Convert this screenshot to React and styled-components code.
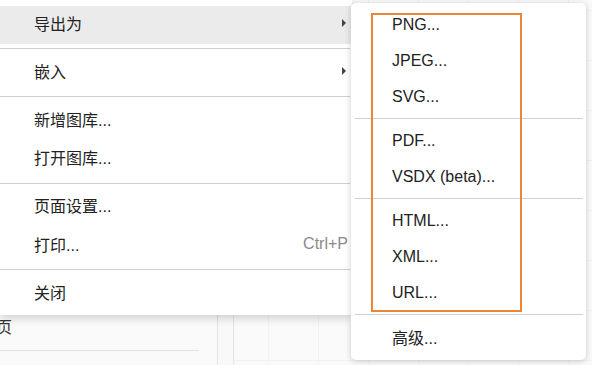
import React from "react";
import styled, { createGlobalStyle } from "styled-components";

const Global = createGlobalStyle`
  html, body { margin: 0; padding: 0; }
  body {
    width: 592px; height: 365px; overflow: hidden;
    background: #f9f9f9;
    font-family: "Liberation Sans", "Noto Sans CJK SC", sans-serif;
  }
`;

const Page = styled.div`
  position: relative;
  width: 592px;
  height: 365px;
  display: grid;
  grid-template-columns: 218px 16px 1fr;
  overflow: hidden;
`;

const Sidebar = styled.div`
  background: #fafafa;
  border-right: 1px solid #e2e2e2;
  display: flex;
  flex-direction: column;
  padding-top: 318px;
`;

const SideItem = styled.div`
  font-size: 16px;
  color: #333;
  line-height: 20px;
  margin-left: -4px;
  height: 32px;
  border-bottom: 1px solid #e2e2e2;
  margin-right: 18px;
`;

const Gutter = styled.div`
  background: #f9f9f9;
  border-right: 1px solid #e4e4e4;
`;

const Canvas = styled.div`
  background-color: #fafafa;
  background-image:
    linear-gradient(to right, #f2f2f2 1px, transparent 1px),
    linear-gradient(to bottom, #f2f2f2 1px, transparent 1px);
  background-size: 50px 50px;
  background-position: 34px 10px;
`;

const Menu = styled.div`
  position: absolute;
  left: 0;
  top: 0;
  width: 352px;
  background: #fff;
  padding: 6px 0 2px;
  box-shadow: 0 3px 9px rgba(0, 0, 0, 0.18);
  font-size: 16px;
  color: #222;
`;

const Item = styled.div`
  display: flex;
  align-items: center;
  justify-content: space-between;
  box-sizing: border-box;
  height: ${(p) => p.$h}px;
  padding: 0 ${(p) => p.$pr}px ${(p) => p.$pb || 0}px ${(p) => p.$pl}px;
  background: ${(p) => (p.$active ? "#ebebeb" : "transparent")};
  white-space: nowrap;
`;

const Shortcut = styled.span`
  color: #8a8a8a;
`;

const Arrow = styled.span`
  width: 0;
  height: 0;
  border-top: 4px solid transparent;
  border-bottom: 4px solid transparent;
  border-left: 4px solid #444;
  margin-right: 2px;
`;

const Sep = styled.div`
  height: 1px;
  background: #cfcfcf;
  margin: ${(p) => p.$m};
`;

const SubMenu = styled.div`
  position: absolute;
  left: 351px;
  top: 3px;
  width: 235px;
  height: 357px;
  box-sizing: border-box;
  background: #fff;
  border-radius: 5px;
  padding: 4px 0 5px;
  box-shadow: 0 1px 6px rgba(0, 0, 0, 0.2);
  font-size: 16px;
  color: #222;
`;

const Highlight = styled.div`
  position: absolute;
  left: 371px;
  top: 13px;
  width: 151px;
  height: 299px;
  box-sizing: border-box;
  border: 2px solid #ec8634;
  pointer-events: none;
`;

const mainItems = [
  { t: "导出为", arrow: true, active: true },
  "sep",
  { t: "嵌入", arrow: true },
  "sep",
  { t: "新增图库..." },
  { t: "打开图库..." },
  "sep",
  { t: "页面设置..." },
  { t: "打印...", sc: "Ctrl+P" },
  "sep",
  { t: "关闭" },
];

const subItems = [
  "PNG...",
  "JPEG...",
  "SVG...",
  "sep",
  "PDF...",
  "VSDX (beta)...",
  "sep",
  "HTML...",
  "XML...",
  "URL...",
  "sep",
  "高级...",
];

export default function App() {
  return (
    <>
      <Global />
      <Page>
        <Sidebar>
          <SideItem>页</SideItem>
        </Sidebar>
        <Gutter />
        <Canvas />
        <Menu>
          {mainItems.map((it, i) =>
            it === "sep" ? (
              <Sep key={i} $m="4px 2px 4.5px 0" />
            ) : (
              <Item key={i} $h={38.4} $pb={4} $pl={34} $pr={4} $active={it.active}>
                <span>{it.t}</span>
                {it.arrow && <Arrow />}
                {it.sc && <Shortcut>{it.sc}</Shortcut>}
              </Item>
            )
          )}
        </Menu>
        <SubMenu>
          {subItems.map((it, i) =>
            it === "sep" ? (
              <Sep key={i} $m="3px 3px 4px 4px" />
            ) : (
              <Item key={i} $h={36} $pl={41} $pr={10}>
                <span>{it}</span>
              </Item>
            )
          )}
        </SubMenu>
        <Highlight />
      </Page>
    </>
  );
}
